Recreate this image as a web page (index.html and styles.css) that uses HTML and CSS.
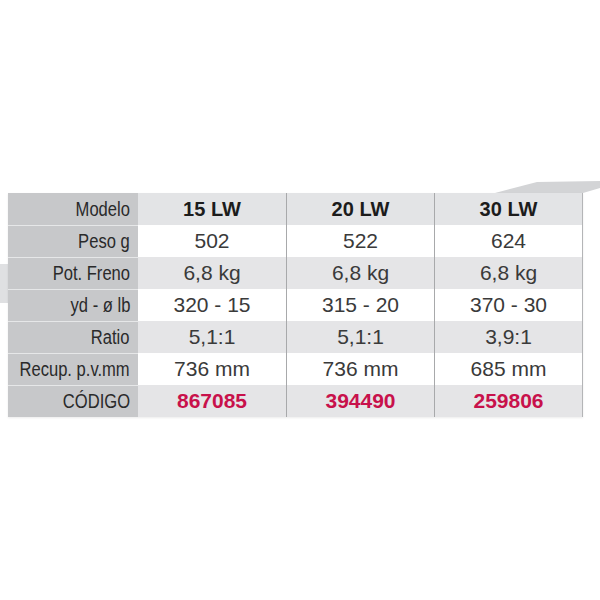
FILE: index.html
```html
<!DOCTYPE html>
<html lang="es">
<head>
<meta charset="utf-8">
<title>Tabla LW</title>
<link rel="stylesheet" href="styles.css">
</head>
<body>
<div class="page">
  <svg class="deco-top" width="105" height="14" viewBox="0 0 105 14"><polygon points="0,13 42,2 105,1 105,8 88,13" fill="#d3d4d6"/></svg>
  <div class="deco-left"></div>
  <div class="spec">
    <div class="lab"><span>Modelo</span></div>
    <div class="cell hd">15 LW</div>
    <div class="cell hd">20 LW</div>
    <div class="cell hd last">30 LW</div>

    <div class="lab"><span>Peso g</span></div>
    <div class="cell w">502</div>
    <div class="cell w">522</div>
    <div class="cell w last">624</div>

    <div class="lab"><span>Pot. Freno</span></div>
    <div class="cell g">6,8 kg</div>
    <div class="cell g">6,8 kg</div>
    <div class="cell g last">6,8 kg</div>

    <div class="lab"><span>yd - ø lb</span></div>
    <div class="cell w">320 - 15</div>
    <div class="cell w">315 - 20</div>
    <div class="cell w last">370 - 30</div>

    <div class="lab"><span>Ratio</span></div>
    <div class="cell g">5,1:1</div>
    <div class="cell g">5,1:1</div>
    <div class="cell g last">3,9:1</div>

    <div class="lab"><span>Recup. p.v.mm</span></div>
    <div class="cell w">736 mm</div>
    <div class="cell w">736 mm</div>
    <div class="cell w last">685 mm</div>

    <div class="lab"><span>CÓDIGO</span></div>
    <div class="cell g code">867085</div>
    <div class="cell g code">394490</div>
    <div class="cell g code last">259806</div>
  </div>
</div>
</body>
</html>
```

FILE: styles.css
```css
html, body {
  margin: 0;
  padding: 0;
  background: #ffffff;
}
.page {
  position: relative;
  width: 600px;
  height: 600px;
  padding: 193px 0 0 8px;
  box-sizing: border-box;
  font-family: "Liberation Sans", Arial, sans-serif;
}
.deco-top {
  position: absolute;
  left: 495px;
  top: 180px;
}
.deco-left {
  position: absolute;
  left: 0;
  top: 264px;
  width: 8px;
  height: 39px;
  background: #dfe0e2;
}
.spec {
  position: relative;
  display: grid;
  grid-template-columns: 130px 149px 148px 148px;
  grid-auto-rows: 32px;
  width: 575px;
  box-shadow: 0 1px 2px rgba(0,0,0,0.08);
}
.lab {
  background: #c7c8ca;
  border-top: 1px solid #e6e7e8;
  display: flex;
  align-items: center;
  justify-content: flex-end;
  padding-right: 8px;
  color: #2a2a2a;
  font-size: 19.5px;
}
.lab:first-child {
  border-top: none;
}
.lab span {
  display: inline-block;
  transform: scaleX(0.85);
  transform-origin: right center;
  white-space: nowrap;
}
.cell {
  display: flex;
  align-items: center;
  justify-content: center;
  border-right: 1px solid #a8a9ab;
  color: #3a3a3a;
  font-size: 21px;
  white-space: nowrap;
}
.cell.last {
  border-right: 1px solid #b4b5b7;
}
.hd {
  background: #e3e4e6;
  font-weight: bold;
  font-size: 20px;
  color: #1c1c1c;
}
.w {
  background: #ffffff;
}
.g {
  background: #e5e5e7;
}
.code {
  color: #c8114b;
  font-weight: bold;
  font-size: 21px;
}
```
